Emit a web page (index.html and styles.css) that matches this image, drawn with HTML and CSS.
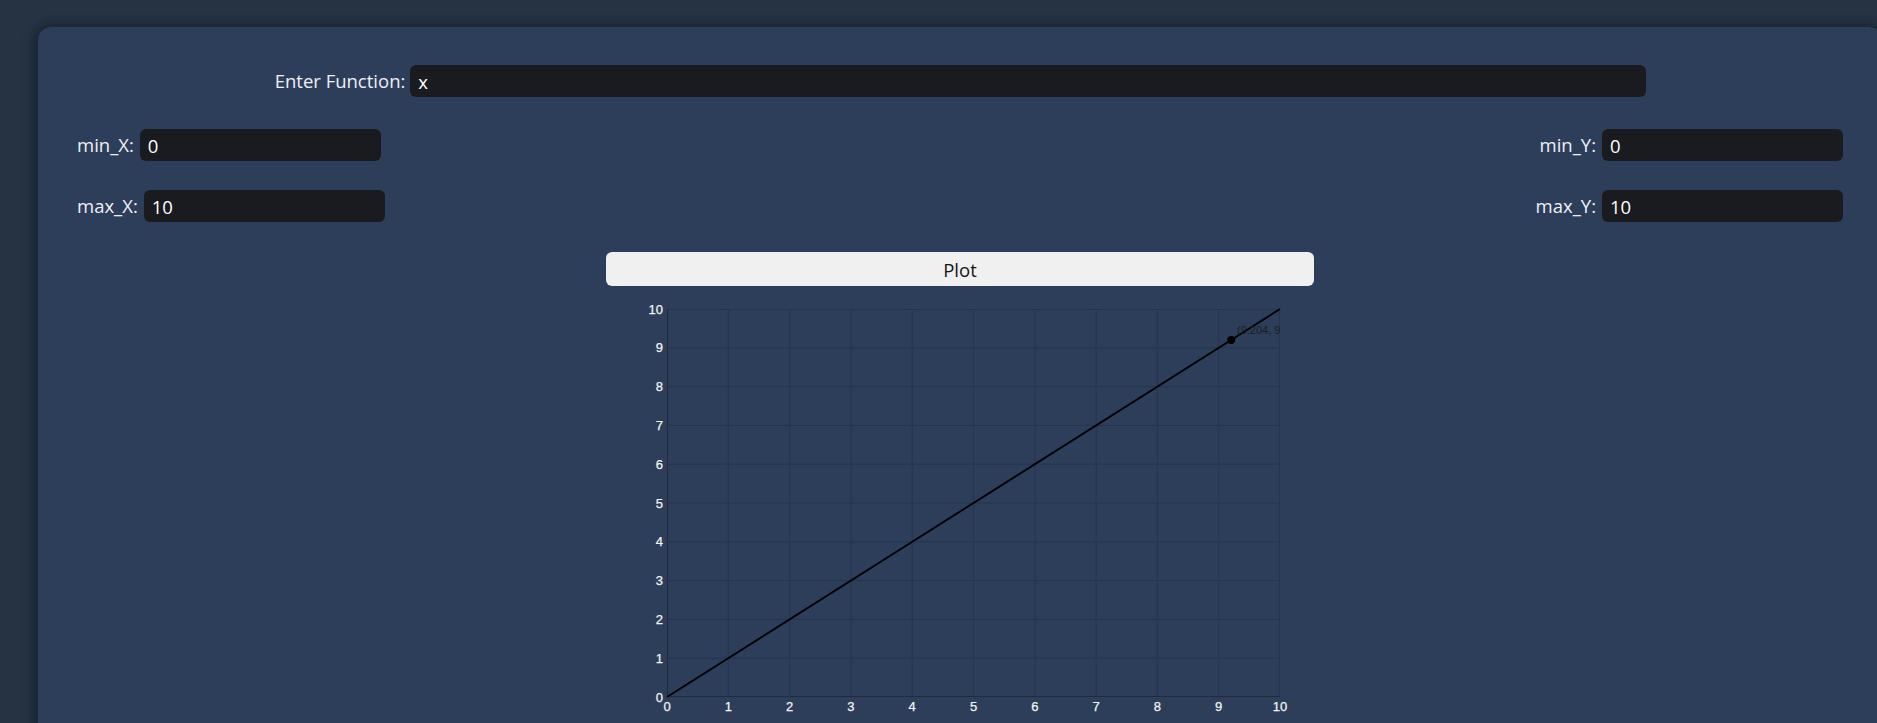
FILE: index.html
```html
<!DOCTYPE html>
<html>
<head>
<meta charset="utf-8">
<link rel="stylesheet" href="styles.css">
</head>
<body>
<div class="panel">
  <div class="func-row">
    <label class="lbl">Enter Function:</label>
    <input class="inp func-inp" type="text" value="x">
  </div>
  <div class="range-row first-range">
    <div class="field"><label class="lbl">min_X:</label><input class="inp small-inp" type="text" value="0"></div>
    <div class="field"><label class="lbl">min_Y:</label><input class="inp small-inp" type="text" value="0"></div>
  </div>
  <div class="range-row">
    <div class="field"><label class="lbl">max_X:</label><input class="inp small-inp" type="text" value="10"></div>
    <div class="field"><label class="lbl">max_Y:</label><input class="inp small-inp" type="text" value="10"></div>
  </div>
  <button class="plot-btn">Plot</button>
  <svg class="chart" width="640" height="426" viewBox="0 0 640 426">
    <defs>
      <clipPath id="plotclip"><rect x="27" y="12" width="613" height="388"/></clipPath>
    </defs>
    <g class="grid">
      <line x1="88.3" y1="12" x2="88.3" y2="400"/>
      <line x1="149.6" y1="12" x2="149.6" y2="400"/>
      <line x1="210.9" y1="12" x2="210.9" y2="400"/>
      <line x1="272.2" y1="12" x2="272.2" y2="400"/>
      <line x1="333.5" y1="12" x2="333.5" y2="400"/>
      <line x1="394.8" y1="12" x2="394.8" y2="400"/>
      <line x1="456.1" y1="12" x2="456.1" y2="400"/>
      <line x1="517.4" y1="12" x2="517.4" y2="400"/>
      <line x1="578.7" y1="12" x2="578.7" y2="400"/>
      <line x1="639.5" y1="12" x2="639.5" y2="400"/>
      <line x1="27" y1="12.5" x2="640" y2="12.5"/>
      <line x1="27" y1="50.8" x2="640" y2="50.8"/>
      <line x1="27" y1="89.6" x2="640" y2="89.6"/>
      <line x1="27" y1="128.4" x2="640" y2="128.4"/>
      <line x1="27" y1="167.2" x2="640" y2="167.2"/>
      <line x1="27" y1="206" x2="640" y2="206"/>
      <line x1="27" y1="244.8" x2="640" y2="244.8"/>
      <line x1="27" y1="283.6" x2="640" y2="283.6"/>
      <line x1="27" y1="322.4" x2="640" y2="322.4"/>
      <line x1="27" y1="361.2" x2="640" y2="361.2"/>
    </g>
    <g class="axis">
      <line x1="27.5" y1="12" x2="27.5" y2="400"/>
      <line x1="27" y1="399.5" x2="640" y2="399.5"/>
    </g>
    <g class="ylabels">
      <text x="23" y="12">10</text>
      <text x="23" y="50.8">9</text>
      <text x="23" y="89.6">8</text>
      <text x="23" y="128.4">7</text>
      <text x="23" y="167.2">6</text>
      <text x="23" y="206">5</text>
      <text x="23" y="244.8">4</text>
      <text x="23" y="283.6">3</text>
      <text x="23" y="322.4">2</text>
      <text x="23" y="361.2">1</text>
      <text x="23" y="400">0</text>
    </g>
    <g class="xlabels">
      <text x="27" y="414">0</text>
      <text x="88.3" y="414">1</text>
      <text x="149.6" y="414">2</text>
      <text x="210.9" y="414">3</text>
      <text x="272.2" y="414">4</text>
      <text x="333.5" y="414">5</text>
      <text x="394.8" y="414">6</text>
      <text x="456.1" y="414">7</text>
      <text x="517.4" y="414">8</text>
      <text x="578.7" y="414">9</text>
      <text x="640" y="414">10</text>
    </g>
    <line class="fline" x1="27" y1="400" x2="640" y2="12"/>
    <g clip-path="url(#plotclip)">
      <circle class="pt" cx="591.2" cy="42.9" r="4"/>
      <text class="ptlabel" x="597" y="37">(9.204, 9.204)</text>
    </g>
  </svg>
</div>
</body>
</html>
```

FILE: styles.css
```css
html, body {
  margin: 0;
  padding: 0;
  overflow: hidden;
}
body {
  background: #253343;
  font-family: "Open Sans", "Noto Sans", sans-serif;
  width: 1877px;
  height: 723px;
}
.panel {
  box-sizing: border-box;
  margin: 27px 0 0 38px;
  width: 1844px;
  height: 760px;
  background: #2c3e5a;
  border-radius: 13px;
  box-shadow: -4px 0 14px rgba(0, 0, 0, 0.28), 0 -2px 8px rgba(0, 0, 0, 0.15);
  padding: 38px 39px 0 39px;
  display: flex;
  flex-direction: column;
}
.func-row {
  display: flex;
  justify-content: center;
  align-items: center;
  gap: 5px;
  margin-left: 1px;
}
.lbl {
  color: #eef0f6;
  font-size: 18.5px;
  line-height: 32px;
  white-space: nowrap;
}
.inp {
  box-sizing: border-box;
  height: 32px;
  border: none;
  outline: none;
  border-radius: 6px;
  background: #1a1b1e;
  color: #ffffff;
  font-family: "Open Sans", "Noto Sans", sans-serif;
  font-size: 18.5px;
  padding: 0 8px;
  margin: 0;
}
.func-inp {
  width: 1236px;
}
.small-inp {
  width: 241px;
}
.range-row {
  display: flex;
  justify-content: space-between;
  align-items: center;
  margin-top: 29px;
}
.first-range {
  margin-top: 32px;
}
.field {
  display: flex;
  align-items: center;
  gap: 6px;
}
.plot-btn {
  align-self: center;
  margin-top: 30px;
  width: 708px;
  height: 34px;
  border: none;
  border-radius: 6px;
  background: #f0f0f0;
  color: #151515;
  font-family: "Open Sans", "Noto Sans", sans-serif;
  font-size: 18.5px;
  padding: 0;
}
.chart {
  align-self: center;
  margin-top: 11px;
  overflow: visible;
  display: block;
}
.grid line {
  stroke: #253550;
  stroke-width: 1;
}
.axis line {
  stroke: #1e2b40;
  stroke-width: 1;
}
.ylabels text {
  fill: #f4f4f4;
  stroke: #f4f4f4;
  stroke-width: 0.25;
  font-family: "Liberation Sans", Arial, sans-serif;
  font-size: 13px;
  text-anchor: end;
  dominant-baseline: central;
}
.xlabels text {
  fill: #f4f4f4;
  stroke: #f4f4f4;
  stroke-width: 0.25;
  font-family: "Liberation Sans", Arial, sans-serif;
  font-size: 13px;
  text-anchor: middle;
}
.fline {
  stroke: #000000;
  stroke-width: 1.8;
}
.pt {
  fill: #000000;
}
.ptlabel {
  fill: #1a1d22;
  font-family: "Liberation Sans", Arial, sans-serif;
  font-size: 11px;
}
```
